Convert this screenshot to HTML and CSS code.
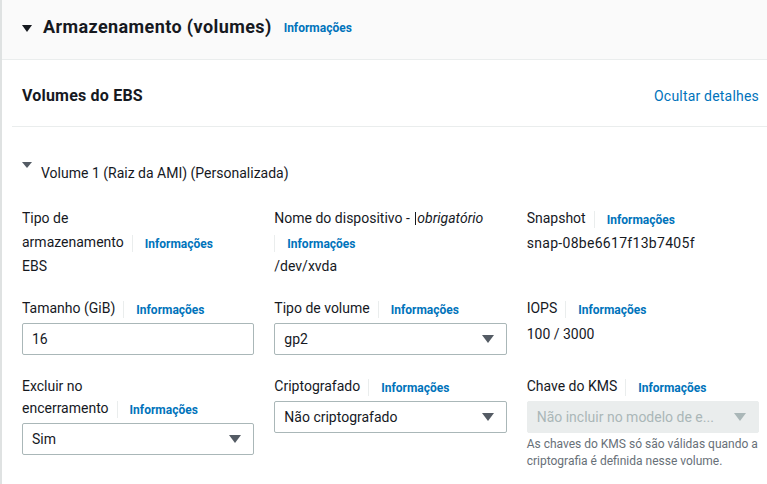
FILE: index.html
```html
<!DOCTYPE html>
<html lang="pt-BR">
<head>
<meta charset="utf-8">
<title>Armazenamento (volumes)</title>
<link rel="stylesheet" href="styles.css">
</head>
<body>
<div class="panel">
  <div class="panel-header">
    <span class="caret caret-lg"></span>
    <h2 class="panel-title">Armazenamento (volumes)</h2>
    <a class="header-info" href="#">Informações</a>
  </div>
  <div class="panel-body">
    <div class="ebs-header">
      <h3 class="ebs-title">Volumes do EBS</h3>
      <a class="link" href="#">Ocultar detalhes</a>
    </div>
    <div class="volume">
      <div class="volume-toggle">
        <span class="caret caret-sm"></span>
        <span class="volume-name">Volume 1 (Raiz da AMI) (Personalizada)</span>
      </div>
      <div class="grid">
        <div class="field tall">
          <div class="label">Tipo de <span class="nowrap"><span class="label-text">armazenamento</span><span class="info"><a href="#">Informações</a></span></span></div>
          <div class="value">EBS</div>
        </div>
        <div class="field tall">
          <div class="label"><span class="label-text">Nome do dispositivo - <span class="cursor"></span><em>obrigatório</em></span><span class="info"><a href="#">Informações</a></span></div>
          <div class="value">/dev/xvda</div>
        </div>
        <div class="field tall">
          <div class="label"><span class="label-text">Snapshot</span><span class="info"><a href="#">Informações</a></span></div>
          <div class="value value-snap">snap-08be6617f13b7405f</div>
        </div>

        <div class="field">
          <div class="label"><span class="label-text">Tamanho (GiB)</span><span class="info"><a href="#">Informações</a></span></div>
          <div class="control input">16</div>
        </div>
        <div class="field">
          <div class="label"><span class="label-text">Tipo de volume</span><span class="info"><a href="#">Informações</a></span></div>
          <div class="control select"><span>gp2</span><span class="arrow"></span></div>
        </div>
        <div class="field">
          <div class="label"><span class="label-text">IOPS</span><span class="info"><a href="#">Informações</a></span></div>
          <div class="value value-iops">100 / 3000</div>
        </div>

        <div class="field">
          <div class="label">Excluir no <span class="nowrap"><span class="label-text">encerramento</span><span class="info"><a href="#">Informações</a></span></span></div>
          <div class="control select"><span>Sim</span><span class="arrow"></span></div>
        </div>
        <div class="field">
          <div class="label"><span class="label-text">Criptografado</span><span class="info"><a href="#">Informações</a></span></div>
          <div class="control select"><span>Não criptografado</span><span class="arrow"></span></div>
        </div>
        <div class="field">
          <div class="label"><span class="label-text">Chave do KMS</span><span class="info"><a href="#">Informações</a></span></div>
          <div class="control select disabled"><span>Não incluir no modelo de e...</span><span class="arrow"></span></div>
          <div class="constraint">As chaves do KMS só são válidas quando a criptografia é definida nesse volume.</div>
        </div>
      </div>
    </div>
  </div>
</div>
</body>
</html>
```

FILE: styles.css
```css
* { box-sizing: border-box; }
html, body { margin: 0; padding: 0; background: #ffffff; }
body {
  font-family: Roboto, "Liberation Sans", Arial, sans-serif;
  font-size: 14px;
  line-height: 22px;
  color: #16191f;
  width: 767px;
  height: 484px;
  overflow: hidden;
}
a { text-decoration: none; color: #0073bb; }

.panel {
  border-left: 2px solid #dfe2e2;
  min-height: 484px;
}

.panel-header {
  display: flex;
  align-items: center;
  background: #fafafa;
  border-bottom: 1px solid #eaeded;
  height: 60px;
  padding: 0 20px 5px 20px;
}
.panel-title {
  margin: 0 0 0 11px;
  font-size: 18px;
  font-weight: 700;
  line-height: 26px;
  letter-spacing: 0.4px;
}
.header-info {
  font-size: 12px;
  font-weight: 700;
  margin-left: 12px;
  line-height: 26px;
  padding-top: 2px;
}

.caret {
  display: inline-block;
  width: 0;
  height: 0;
  border-left: 5px solid transparent;
  border-right: 5px solid transparent;
  border-top: 7px solid #16191f;
}
.caret-lg { margin-top: 2px; }
.caret-sm {
  border-top: 6px solid #545b64;
  margin-top: 0;
  flex: none;
}

.panel-body { padding-left: 10px; }

.ebs-header {
  display: flex;
  justify-content: space-between;
  align-items: center;
  border-bottom: 1px solid #eaeded;
  padding: 25px 8px 19px 10px;
}
.ebs-title {
  margin: 0;
  font-size: 16px;
  font-weight: 700;
  line-height: 22px;
  letter-spacing: 0.2px;
}
.link { font-size: 14px; line-height: 22px; letter-spacing: 0.2px; }

.volume { padding: 35px 8px 0 10px; }
.volume-toggle {
  display: flex;
  align-items: flex-start;
  gap: 9px;
}
.volume-name { line-height: 22px; }

.grid {
  display: grid;
  grid-template-columns: repeat(3, 1fr);
  column-gap: 20px;
  row-gap: 20px;
  margin-top: 22px;
}

.label { line-height: 22px; }
.tall .label { line-height: 24px; }
.nowrap { white-space: nowrap; }
.label-text { padding-right: 8px; }
.label em { font-style: italic; }
.cursor {
  display: inline-block;
  width: 1px;
  height: 13px;
  background: #16191f;
  vertical-align: -2px;
  margin-left: 2px;
  margin-right: 1px;
}
.info {
  display: inline-block;
  border-left: 1px solid #eaeded;
  padding-left: 12px;
  line-height: 16px;
  vertical-align: middle;
}
.info a {
  font-size: 12px;
  font-weight: 700;
  color: #0073bb;
}

.value { margin-top: 1px; line-height: 22px; }
.value-snap { margin-top: 2px; letter-spacing: 0.3px; }
.value-iops { margin-top: 4px; }

.control {
  margin-top: 4px;
  height: 32px;
  border: 1px solid #aab7b8;
  border-radius: 2px;
  padding: 0 12px 0 9px;
  display: flex;
  align-items: center;
  justify-content: space-between;
  line-height: 22px;
}
.arrow {
  flex: none;
  width: 0;
  height: 0;
  border-left: 6px solid transparent;
  border-right: 6px solid transparent;
  border-top: 8px solid #545b64;
}
.disabled {
  background: #eaeded;
  border-color: #eaeded;
  color: #aab7b8;
}
.disabled .arrow { border-top-color: #aab7b8; }
.constraint {
  font-size: 12px;
  line-height: 17px;
  color: #687078;
  margin-top: 3px;
}
```
